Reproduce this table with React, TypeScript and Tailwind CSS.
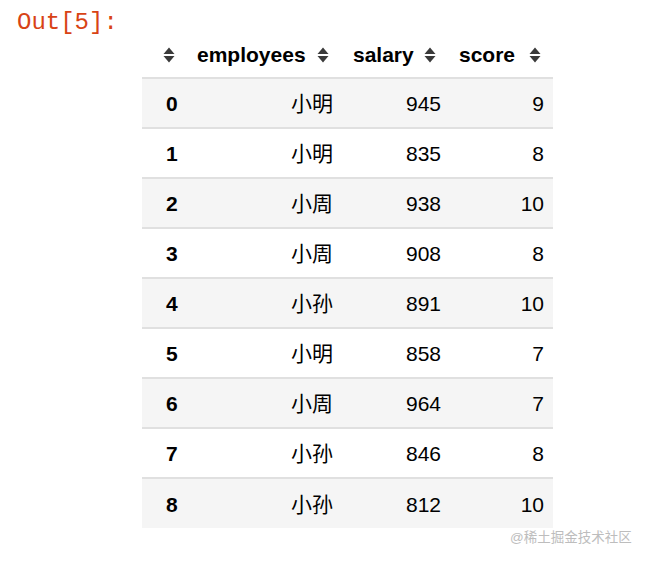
const rows = [
  { idx: 0, name: "小明", salary: 945, score: 9 },
  { idx: 1, name: "小明", salary: 835, score: 8 },
  { idx: 2, name: "小周", salary: 938, score: 10 },
  { idx: 3, name: "小周", salary: 908, score: 8 },
  { idx: 4, name: "小孙", salary: 891, score: 10 },
  { idx: 5, name: "小明", salary: 858, score: 7 },
  { idx: 6, name: "小周", salary: 964, score: 7 },
  { idx: 7, name: "小孙", salary: 846, score: 8 },
  { idx: 8, name: "小孙", salary: 812, score: 10 },
];

function SortIcon() {
  return (
    <svg width="12" height="16" viewBox="0 0 12 16" className="shrink-0">
      <path d="M6 0.5 L11.5 7 L0.5 7 Z" fill="#3a3a3a" />
      <path d="M6 15.5 L11.5 9 L0.5 9 Z" fill="#3a3a3a" />
    </svg>
  );
}

export default function App() {
  const font = { fontFamily: '"Liberation Sans", Arial, "Noto Sans CJK SC", sans-serif' };
  return (
    <div className="w-[648px] h-[562px] bg-white relative overflow-hidden" style={font}>
      <div className="absolute left-[17px] top-[8px] text-[24px] leading-[30px] text-[#d84315] font-['Liberation_Mono',monospace]">
        Out[5]:
      </div>

      <div className="pt-[38px] pl-[142px]">
        <table className="table-fixed border-collapse text-[21px] text-black">
          <colgroup>
            <col className="w-[45px]" />
            <col className="w-[156px]" />
            <col className="w-[106px]" />
            <col className="w-[104px]" />
          </colgroup>
          <thead>
            <tr className="h-[40px]">
              <th className="p-0 pb-[6px] align-middle">
                <div className="flex justify-center pl-[8px]">
                  <SortIcon />
                </div>
              </th>
              <th className="p-0 pb-[6px] align-middle">
                <div className="flex items-center justify-between pl-[10px] pr-[14px] font-bold">
                  <span>employees</span>
                  <SortIcon />
                </div>
              </th>
              <th className="p-0 pb-[6px] align-middle">
                <div className="flex items-center justify-between pl-[10px] pr-[13px] font-bold">
                  <span>salary</span>
                  <SortIcon />
                </div>
              </th>
              <th className="p-0 pb-[6px] align-middle">
                <div className="flex items-center justify-between pl-[10px] pr-[12px] font-bold">
                  <span>score</span>
                  <SortIcon />
                </div>
              </th>
            </tr>
          </thead>
          <tbody>
            {rows.map((r) => (
              <tr
                key={r.idx}
                className={`h-[50px] border-t-2 border-[#e0e0e0] ${r.idx % 2 === 0 ? "bg-[#f5f5f5]" : "bg-white"}`}
              >
                <th className="p-0 pl-[24px] pt-[2px] text-left font-bold align-middle">{r.idx}</th>
                <td className="p-0 pr-[10px] pt-[2px] text-right align-middle">{r.name}</td>
                <td className="p-0 pr-[8px] pt-[2px] text-right align-middle">{r.salary}</td>
                <td className="p-0 pr-[9px] pt-[2px] text-right align-middle">{r.score}</td>
              </tr>
            ))}
          </tbody>
        </table>
      </div>

      <div className="absolute left-[510px] top-[529px] text-[13.5px] leading-[18px] text-[#bdbdbd]">
        @稀土掘金技术社区
      </div>
    </div>
  );
}
